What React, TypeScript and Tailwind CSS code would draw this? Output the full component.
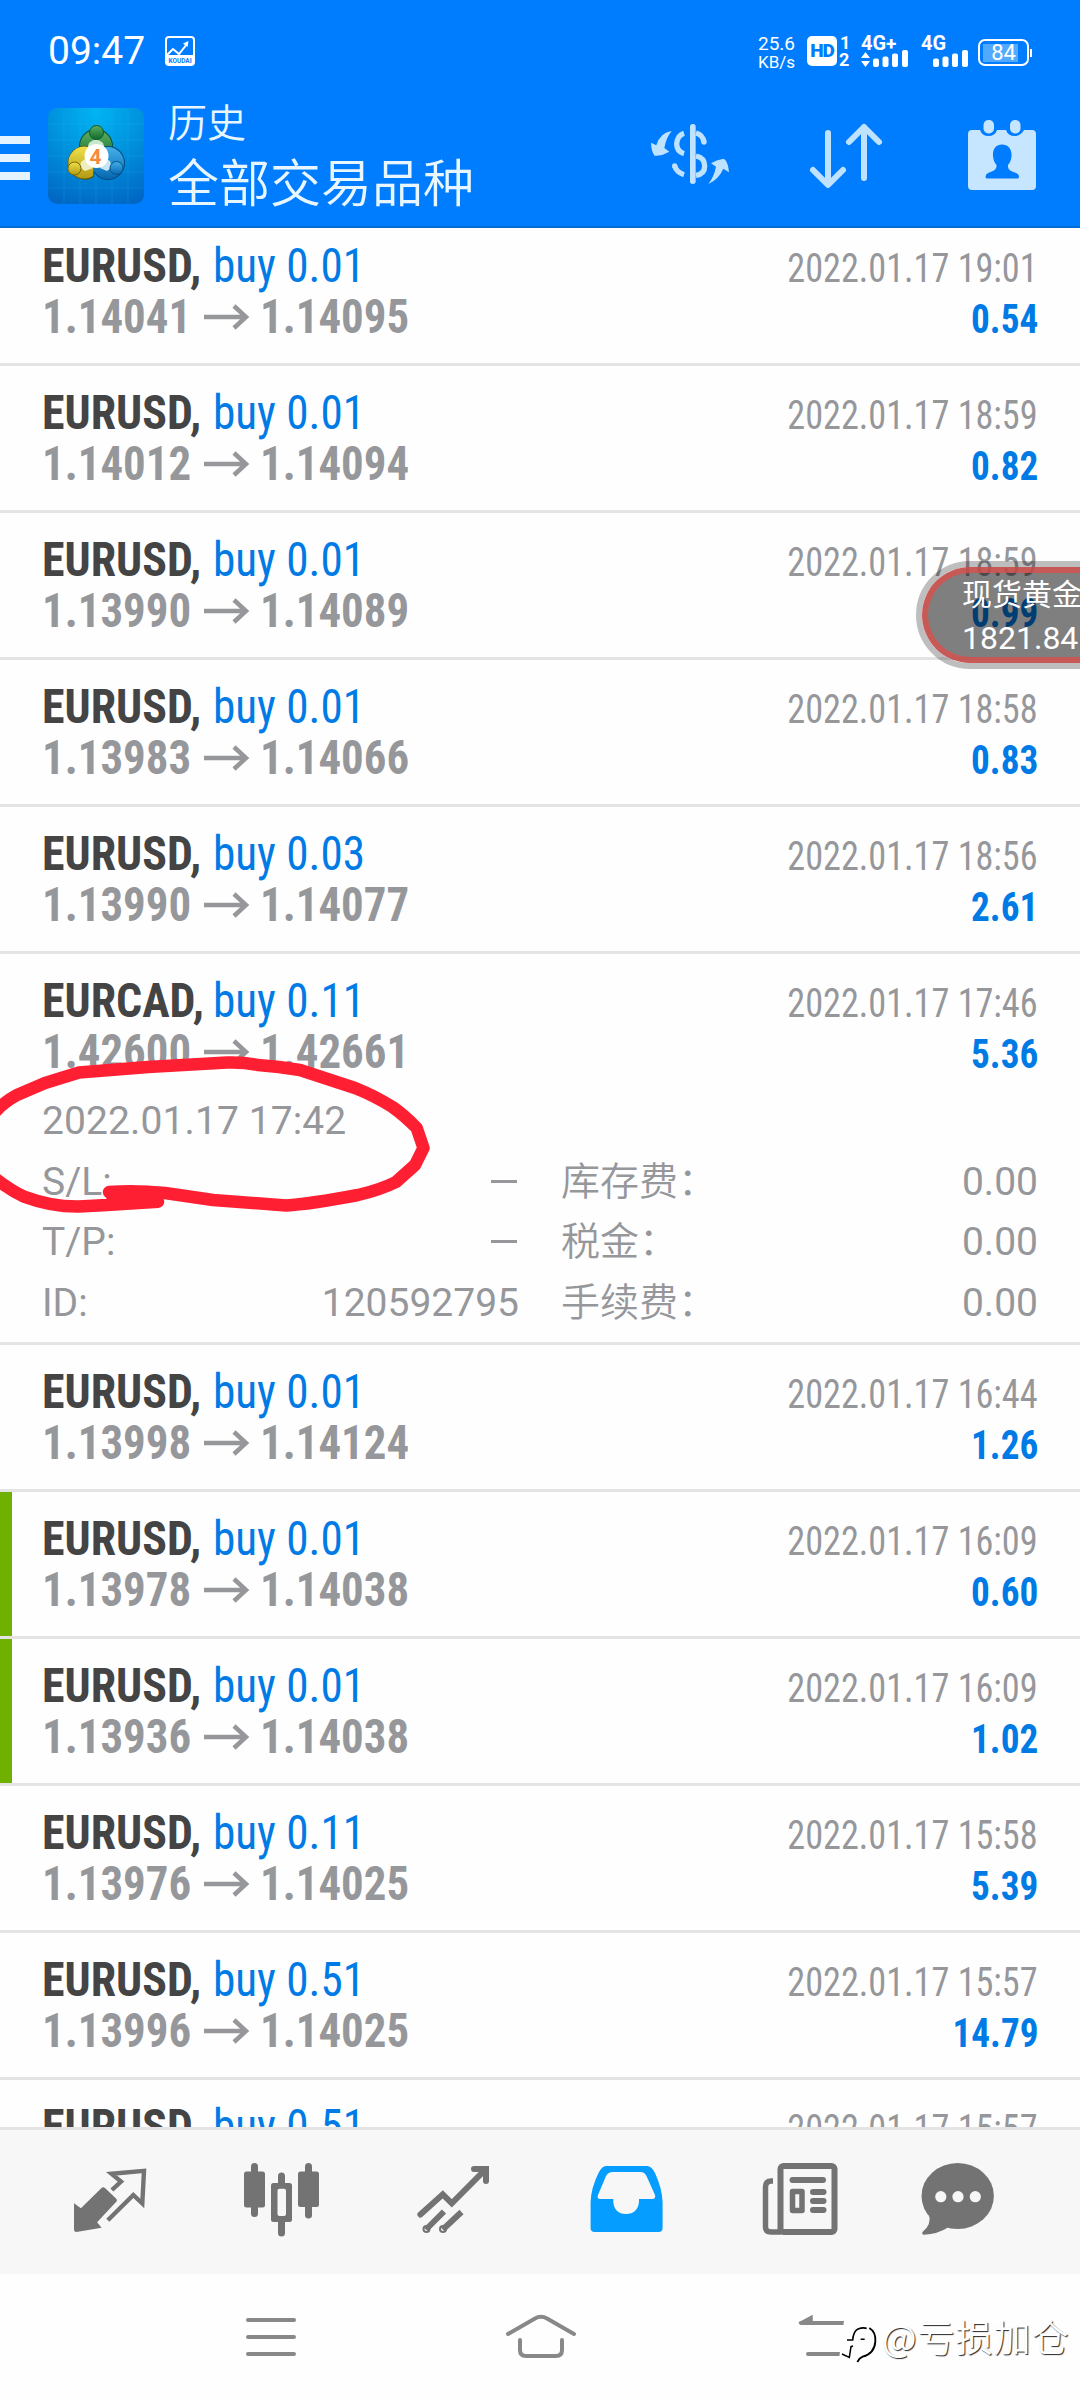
import React from 'react';

type Deal = {
  symbol: string;
  volume: string;
  open: string;
  close: string;
  time: string;
  profit: string;
  deposit?: boolean;
  expanded?: boolean;
};

const DEALS: Deal[] = [
  { symbol: 'EURUSD', volume: '0.01', open: '1.14041', close: '1.14095', time: '2022.01.17 19:01', profit: '0.54' },
  { symbol: 'EURUSD', volume: '0.01', open: '1.14012', close: '1.14094', time: '2022.01.17 18:59', profit: '0.82' },
  { symbol: 'EURUSD', volume: '0.01', open: '1.13990', close: '1.14089', time: '2022.01.17 18:59', profit: '0.99' },
  { symbol: 'EURUSD', volume: '0.01', open: '1.13983', close: '1.14066', time: '2022.01.17 18:58', profit: '0.83' },
  { symbol: 'EURUSD', volume: '0.03', open: '1.13990', close: '1.14077', time: '2022.01.17 18:56', profit: '2.61' },
  { symbol: 'EURCAD', volume: '0.11', open: '1.42600', close: '1.42661', time: '2022.01.17 17:46', profit: '5.36', expanded: true },
  { symbol: 'EURUSD', volume: '0.01', open: '1.13998', close: '1.14124', time: '2022.01.17 16:44', profit: '1.26' },
  { symbol: 'EURUSD', volume: '0.01', open: '1.13978', close: '1.14038', time: '2022.01.17 16:09', profit: '0.60', deposit: true },
  { symbol: 'EURUSD', volume: '0.01', open: '1.13936', close: '1.14038', time: '2022.01.17 16:09', profit: '1.02', deposit: true },
  { symbol: 'EURUSD', volume: '0.11', open: '1.13976', close: '1.14025', time: '2022.01.17 15:58', profit: '5.39' },
  { symbol: 'EURUSD', volume: '0.51', open: '1.13996', close: '1.14025', time: '2022.01.17 15:57', profit: '14.79' },
  { symbol: 'EURUSD', volume: '0.51', open: '1.13996', close: '1.14025', time: '2022.01.17 15:57', profit: '14.79' },
];

const DETAILS = [
  { label: 'S/L:', value: '–', feeLabel: '库存费：', fee: '0.00' },
  { label: 'T/P:', value: '–', feeLabel: '税金：', fee: '0.00' },
  { label: 'ID:', value: '120592795', feeLabel: '手续费：', fee: '0.00' },
];

const SignalBars = () => (
  <svg width="36" height="17" viewBox="0 0 36 17" fill="#fff">
    <rect x="0" y="8.5" width="6" height="8.5" rx="2" />
    <rect x="9.5" y="6.5" width="6" height="10.5" rx="2" />
    <rect x="19" y="3.5" width="6" height="13.5" rx="2" />
    <rect x="29" y="0" width="6" height="17" rx="2" />
  </svg>
);

const StatusBar = () => (
  <div className="flex h-[102px] items-start pt-9 pl-12 text-white">
    <span className="w-[117px] text-[39px] leading-[31px]">09:47</span>
    <svg width="30" height="30" viewBox="0 0 30 30" fill="none">
      <rect x="1" y="1" width="28" height="28" rx="3" stroke="#fff" strokeWidth="2" />
      <path d="M1 19h28v8q0 2-2 2H3q-2 0-2-2z" fill="#fff" />
      <path d="M2 19l6-6 6 5 8-10" stroke="#fff" strokeWidth="2" />
      <path d="M23.500 5l-1 6-4.500-3.500z" fill="#fff" />
      <text x="15" y="26.500" textAnchor="middle" fontSize="6.500" fontWeight="700" fill="#007dff">KOUDAI</text>
    </svg>
    <div className="ml-[561px] flex w-[51px] flex-col items-center pr-2.5 text-[19px] leading-[16px]">
      <span>25.6</span>
      <span className="pt-0.5 text-[17px] leading-[16px]">KB/s</span>
    </div>
    <span className="flex h-[30px] w-[30px] items-center justify-center rounded-[5px] bg-white text-[19px] font-black tracking-[-1px] text-[#007dff]">HD</span>
    <div className="ml-0.5 flex w-[22px] flex-col text-[18px] leading-[14px] font-bold">
      <span className="pl-px">1</span>
      <span className="pt-[3px]">2</span>
    </div>
    <div className="flex h-[31px] w-[60px] flex-col">
      <span className="text-[20px] leading-[15px] font-bold whitespace-nowrap">4G<span className="text-[19px]">+</span></span>
      <span className="-mt-px flex items-end gap-[3px]">
        <svg width="9" height="15" viewBox="0 0 9 15" fill="#fff">
          <path d="M4.500 0L9 6H0zM4.500 15L9 9H0z" />
        </svg>
        <SignalBars />
      </span>
    </div>
    <div className="flex h-[31px] w-[57px] flex-col">
      <span className="text-[20px] leading-[15px] font-bold">4G</span>
      <span className="-mt-px flex pl-[12px]">
        <SignalBars />
      </span>
    </div>
    <div className="mt-[3px] flex items-center">
      <div className="flex h-[27px] w-[51px] items-center rounded-[7px] border-2 border-white p-[3px]">
        <div className="flex h-[18px] w-[35px] items-center justify-center bg-[#52aaff] pl-1.5 text-[22px]">84</div>
      </div>
      <div className="ml-px h-2 w-0.5 bg-white" />
    </div>
  </div>
);

const AppLogo = () => (
  <svg className="ml-[18px]" width="96" height="96" viewBox="0 0 96 96">
    <defs>
      <radialGradient id="tile" cx="0.5" cy="0.05" r="1">
        <stop offset="0" stopColor="#00b4f4" />
        <stop offset="0.5" stopColor="#0090dc" />
        <stop offset="1" stopColor="#0068c4" />
      </radialGradient>
      <linearGradient id="green" x1="0" y1="0" x2="0" y2="1">
        <stop offset="0" stopColor="#5fae62" />
        <stop offset="1" stopColor="#0d6b2b" />
      </linearGradient>
      <linearGradient id="gold" x1="0" y1="0" x2="0" y2="1">
        <stop offset="0" stopColor="#f0e04a" />
        <stop offset="1" stopColor="#b39a14" />
      </linearGradient>
      <linearGradient id="sky" x1="0" y1="0" x2="0" y2="1">
        <stop offset="0" stopColor="#45b0ea" />
        <stop offset="1" stopColor="#0568b0" />
      </linearGradient>
    </defs>
    <rect width="96" height="96" rx="9" fill="url(#tile)" />
    <path d="M16 0v96M32 0v96M48 0v96M64 0v96M80 0v96M0 16h96M0 32h96M0 48h96M0 64h96M0 80h96" stroke="#3cc0f4" strokeOpacity="0.18" />
    <circle cx="48" cy="38" r="17" fill="#0a4f3a" />
    <circle cx="48" cy="38" r="16" fill="url(#green)" />
    <circle cx="60" cy="55" r="17" fill="#024a80" />
    <circle cx="60" cy="55" r="16" fill="url(#sky)" />
    <path d="M46 69a17 17 0 1 1-6-31l6 9z" fill="#5c5408" />
    <path d="M45 68a16 16 0 1 1-5-29l6 9z" fill="url(#gold)" />
    <path d="M41 35q7-7 14 0l2 6H39z" fill="#c9e6cf" />
    <path d="M33 54q-2 6 4 9l8-3-8-9z" fill="#efeec0" />
    <path d="M62 53q3 7-3 10l-7-3 6-9z" fill="#c8e6f4" />
    <circle cx="48.500" cy="24.500" r="7" fill="url(#green)" stroke="#0b5a2a" />
    <circle cx="26.500" cy="60.500" r="6.500" fill="url(#gold)" stroke="#77690c" />
    <circle cx="68.500" cy="60" r="6.500" fill="url(#sky)" stroke="#04568f" />
    <circle cx="48.500" cy="48" r="12" fill="#fff" />
    <text x="47.500" y="55.500" textAnchor="middle" fontSize="21" fontWeight="700" fill="#f58a3c">4</text>
  </svg>
);

const Toolbar = () => (
  <div className="flex h-[126px] items-start border-b-2 border-[#006cd6]">
    <div className="mt-[34px] flex w-[30px] flex-col gap-2.5">
      <div className="h-2 bg-[#e4f3ff]" />
      <div className="h-2 bg-[#e4f3ff]" />
      <div className="h-2 bg-[#e4f3ff]" />
    </div>
    <div className="mt-1.5"><AppLogo /></div>
    <div className="-mt-[3px] ml-6 flex w-[480px] flex-col font-['Noto_Sans_CJK_SC',sans-serif] font-[350] text-[#e8f6ff]">
      <span className="text-[39px] leading-[42px]">历史</span>
      <span className="mt-[5px] text-[51px] leading-[68px]">全部交易品种</span>
    </div>
    {/* deals / currency */}
    <svg className="mt-2 -ml-2" width="100" height="90" viewBox="0 0 300 270" fill="#bfe3ff">
      <rect x="150" y="42" width="17" height="180" rx="8" />
      <path d="M95 63Q60 68 49 106L33 98Q34 122 42 134Q44 139 50 137Q70 136 88 125L73 114Q78 84 95 63z" />
      <path d="M205 222Q236 208 250 176L267 187Q265 162 256 150Q253 146 248 147Q230 149 213 160L228 170Q222 200 205 222z" />
      <path d="M132 70Q111 77 110 102Q110 124 132 131M104 168Q110 187 132 194M168 69Q188 74 192 96M168 138Q194 143 194 168Q194 192 168 196" fill="none" stroke="#bfe3ff" strokeWidth="16" />
      <circle cx="192" cy="96" r="8" />
      <circle cx="104" cy="168" r="8" />
    </svg>
    <svg className="mt-[18px] ml-[66px]" width="80" height="72" viewBox="0 0 80 72" fill="none" stroke="#bfe3ff" strokeWidth="6" strokeLinecap="round" strokeLinejoin="round">
      <path d="M22 13v51M7 50l15 15 15-15M58 58V7M43 22L58 7l15 15" />
    </svg>
    {/* calendar with user */}
    <svg className="mt-[18px] ml-[82px]" width="68" height="70" viewBox="0 0 68 70" fill="#c6e5ff">
      <path fillRule="evenodd" d="M4 10H12Q14 16 20.500 16Q27 16 29 10H38Q40 16 46.500 16Q53 16 56 10H64Q68 10 68 14V66Q68 70 64 70H4Q0 70 0 66V14Q0 10 4 10zM34 24.500C28 24.500 24.500 29 25 36Q25.500 42 28.500 45Q29 49 25 51L20 53Q17.500 54 17.500 57Q17.500 58.500 19.500 58.500H49Q51 58.500 51 57Q51 54 48 53L43 51Q39.500 49 40 45Q43 42 43.500 36C44 29 40 24.500 34 24.500z" />
      <rect x="15.500" y="0" width="10.500" height="13.500" rx="5" />
      <rect x="42" y="0" width="10.500" height="13.500" rx="5" />
    </svg>
  </div>
);

const Arrow = () => (
  <svg className="mr-[9px] ml-[11px]" width="48" height="26" viewBox="0 0 48 26" fill="none" stroke="#96979b" strokeWidth="4.500">
    <path d="M1 13h43M31 2l12 11-12 11" />
  </svg>
);

const DealDetails = () => (
  <div className="mt-[14px] h-[251px] text-[39px] leading-[60px] text-[#96979b]">
    <div className="h-[60.500px] tracking-[0.100px]">2022.01.17 17:42</div>
    {DETAILS.map((row) => (
      <div key={row.label} className="flex h-[60.500px] items-baseline">
        <span>{row.label}</span>
        <span className="ml-auto w-[260px] text-right">
          {row.value === '–' ? <span className="mr-0.5 mb-3 inline-block h-[3px] w-[26px] bg-[#96979b]" /> : row.value}
        </span>
        <span className="ml-[42px] w-[240px] font-['Noto_Sans_CJK_SC',sans-serif] leading-none font-[350]">{row.feeLabel}</span>
        <span className="w-[237px] text-right">{row.fee}</span>
      </div>
    ))}
  </div>
);

const DealRow = ({ deal }: { deal: Deal }) => (
  <div className="flex shrink-0 border-b-[3px] border-[#e4e4e4]">
    <div className={deal.deposit ? 'w-3 bg-[#6fb000]' : 'w-3'} />
    <div className={deal.expanded ? 'flex-1 pt-[21px] pr-[42px] pl-[30px]' : 'h-[144px] flex-1 pt-[21px] pr-[42px] pl-[30px]'}>
      <div className="flex h-[51px] items-baseline justify-between leading-[51px] [font-stretch:75%]">
        <span className="flex text-[48px] whitespace-nowrap">
          <b className="w-[171px] origin-left scale-x-[0.955] font-bold text-[#444]">{deal.symbol},</b>
          <span className="origin-left scale-x-[0.940] font-[440] text-[#007be5]">buy {deal.volume}</span>
        </span>
        <span className="origin-right scale-x-[0.905] text-[40px] text-[#96979b]">{deal.time}</span>
      </div>
      <div className="flex h-[51px] items-baseline justify-between leading-[51px] font-bold [font-stretch:75%]">
        <span className="flex items-center text-[48px] text-[#96979b]">
          <span className="w-[150px] origin-left scale-x-[0.935]">{deal.open}</span>
          <Arrow />
          <span className="origin-left scale-x-[0.935]">{deal.close}</span>
        </span>
        <span className="origin-right scale-x-[0.93] text-[40px] text-[#007be5]">{deal.profit}</span>
      </div>
      {deal.expanded && <DealDetails />}
    </div>
  </div>
);

const TabBar = () => (
  <nav className="flex h-[147px] items-start justify-between border-t-[3px] border-[#e4e4e4] bg-[#f7f7f7] px-[70px] pt-8 text-[#737373]">
    {/* quotes */}
    <svg width="80" height="80" viewBox="0 0 80 80">
      <path d="M4 41.300L10.900 46.300 31.500 26Q33.300 24.500 35 26L46.500 37Q47.500 38.200 46.500 39.500L27.100 60.300 31.600 65.700 6.400 70Q4 70 4 67.500z" fill="currentColor" />
      <path d="M41.900 28L51 19.500 41.500 11.800 74 8.800 72.300 41.500 63.300 33 37.800 58.300" fill="none" stroke="currentColor" strokeWidth="4.400" />
    </svg>
    {/* candlestick chart */}
    <svg width="80" height="80" viewBox="0 0 80 80" fill="currentColor">
      <rect x="2" y="9.500" width="21" height="36" rx="2.500" />
      <rect x="9" y="1" width="7" height="54" rx="3.500" />
      <path fillRule="evenodd" d="M31.500 21h16q2.500 0 2.500 2.500v34q0 2.500-2.500 2.500h-16q-2.500 0-2.500-2.500v-34q0-2.500 2.500-2.500zM37.500 26.700q-2 0-2 2v23.300q0 2 2 2h4.500q2 0 2-2V28.700q0-2-2-2z" />
      <path d="M36 22v-8a3.500 3.500 0 0 1 7 0v8zM36 59v12a3.500 3.500 0 0 0 7 0V59z" />
      <rect x="56" y="9.500" width="21" height="35.500" rx="2.500" />
      <rect x="63" y="1" width="7" height="55.500" rx="3.500" />
    </svg>
    {/* trade */}
    <svg width="80" height="80" viewBox="0 0 80 80" fill="none" stroke="currentColor" strokeWidth="6">
      <path d="M6.400 52.500L28.800 32.300 37.800 41.300 71.500 7.300M60 7h12v12" strokeLinecap="round" />
      <path d="M12 67.500L30 49.500M28.800 67.500L47.500 50" />
      <circle cx="12.500" cy="67" r="1" />
      <circle cx="29" cy="67" r="1" />
    </svg>
    {/* history, active */}
    <svg width="80" height="80" viewBox="0 0 80 80" fill="#059dff">
      <path fillRule="evenodd" d="M4.600 40Q5 26 12.500 11Q16 4 20 4H61Q65.500 4 69 11Q76 26 76.600 40V66a4 4 0 0 1-4 4H8.600a4 4 0 0 1-4-4zM27 10Q22 10 20 14L12 33Q10.500 37 14.500 37H27.300V40Q28.500 52 40 52Q51.500 52 53 40V37H66Q70 37 69 33L60.500 14Q58.500 10 54.500 10z" />
    </svg>
    {/* news */}
    <svg width="80" height="80" viewBox="0 0 80 80" fill="none" stroke="currentColor" strokeWidth="6">
      <rect x="22.500" y="4" width="54" height="66" rx="3" />
      <path d="M15 19h-1.500Q7.500 19 7.500 25V65Q7.500 70 13 70H23" strokeWidth="5.500" />
      <path d="M34.500 18H65M55 30H65.500M55 39H65.500M55 48H65.500" strokeLinecap="round" />
      <rect x="34.500" y="29.500" width="9.500" height="19" strokeWidth="5.500" strokeLinejoin="round" />
    </svg>
    {/* chat */}
    <svg className="overflow-visible" width="80" height="80" viewBox="0 0 80 80">
      <ellipse cx="27.700" cy="34" rx="36.200" ry="33" fill="currentColor" />
      <path d="M-1 53Q2 62-7.500 70Q-8.500 72.500-6 72.700Q8 72 18 65.500z" fill="currentColor" />
      <circle cx="10.800" cy="34.700" r="5.600" fill="#f7f7f7" />
      <circle cx="28" cy="34.700" r="5.600" fill="#f7f7f7" />
      <circle cx="45.300" cy="34.700" r="5.600" fill="#f7f7f7" />
    </svg>
  </nav>
);

const SystemNav = () => (
  <div className="flex h-[126px] items-start bg-[#fefefe] pt-[39px] pl-[245px]">
    <svg width="52" height="46" viewBox="0 0 52 46" stroke="#888" strokeWidth="4" strokeLinecap="round">
      <path d="M3 7h46M3 24h46M3 41h46" />
    </svg>
    <svg className="ml-[208px]" width="74" height="48" viewBox="0 0 74 48" fill="none" stroke="#888" strokeWidth="4" strokeLinecap="round">
      <path d="M3 21L30 5.500Q36 2 42 5.500L69 21M15 27V37Q15 43 21 43H51Q57 43 57 37V27" />
    </svg>
    <svg className="ml-[217px]" width="60" height="48" viewBox="0 0 60 48" fill="none" stroke="#888" strokeWidth="4" strokeLinecap="round">
      <path d="M5 10H56M12 41H56" />
      <path d="M3 10L16 3V10z" fill="#888" strokeWidth="1.500" />
    </svg>
  </div>
);

const Watermark = () => (
  <div className="absolute top-[2304px] left-[838px] flex items-center">
    <svg width="44" height="64" viewBox="0 0 132 192" fill="none">
      <path d="M54 30Q30 30 18 50L4 158 60 176 112 156 120 60z" fill="#fefefe" />
      <path d="M27 108H44Q47 80 60 75Q74 70 86 73" stroke="#000" strokeWidth="5" />
      <path d="M94 72Q114 84 112 112Q110 148 74 158Q64 162 58 174" stroke="#000" strokeWidth="5.500" />
      <path d="M12 150L34 160 39 128 45 126M68 106H80" stroke="#000" strokeWidth="4.500" />
    </svg>
    <span className="font-['Noto_Sans_CJK_SC',sans-serif] text-[37px] leading-[60px] font-[350] tracking-[1px] whitespace-nowrap text-white [text-shadow:1px_1px_1px_rgba(0,0,0,0.850)]">@亏损加仓</span>
  </div>
);

export default function App() {
  return (
    <div className="relative flex h-[2400px] w-[1080px] flex-col overflow-hidden bg-[#fefefe] font-['Roboto','Noto_Sans_CJK_SC',sans-serif]">
      <header className="h-[228px] bg-[#007dff]">
        <StatusBar />
        <Toolbar />
      </header>

      <main className="h-[1899px] overflow-hidden">
        <div className="-mt-[9px] flex flex-col">
          {DEALS.map((deal, i) => (
            <DealRow key={i} deal={deal} />
          ))}
        </div>
      </main>

      <TabBar />
      <SystemNav />

      {/* Floating gold quote, half off the screen edge */}
      <div className="absolute top-[561px] left-[916px] h-[108px] w-[240px] rounded-full border-[6px] border-black/25">
        <div className="h-full rounded-full border-[6px] border-[#d9504c]/80 bg-black/50 pl-[34px] whitespace-nowrap text-white">
          <div className="-mt-0.5 font-['Noto_Sans_CJK_SC',sans-serif] text-[30px] leading-[42px]">现货黄金</div>
          <div className="mt-[5px] text-[32px] leading-[40px]">1821.84</div>
        </div>
      </div>

      {/* Hand-drawn marker */}
      <svg className="absolute top-[1040px] left-0" width="440" height="180" viewBox="0 1040 440 180" fill="none" stroke="#ff1f33" strokeWidth="12.500" strokeLinecap="round" strokeLinejoin="round">
        <path d="M109 1192Q135 1190 165 1193L213 1200 286 1205.500Q310 1204 358 1195Q380 1190 396 1182L415 1165 423.500 1148 416.700 1128Q404 1115 392.500 1107Q375 1096 355 1088L300 1070 279 1067 258 1065Q243 1062 227 1062.600L148 1067 79 1072.600 45 1083 17 1095Q4 1102-4 1111" />
        <path d="M-4 1179Q10 1190 24 1196.600 52 1207 79 1206.600L107 1205 158 1201.700M112 1196L158 1197" />
      </svg>

      <Watermark />
    </div>
  );
}
